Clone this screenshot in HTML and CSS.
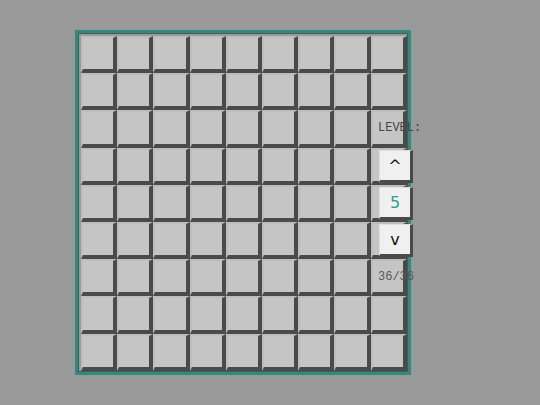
FILE: index.html
```html
<!DOCTYPE html>
<html>
<head>
<meta charset="utf-8">
<link rel="stylesheet" href="styles.css">
</head>
<body>
<div class="stage">
  <div class="board" id="board"></div>
  <div class="panel">
    <div class="label">LEVEL:</div>
    <div class="btn arrow">^</div>
    <div class="btn level">5</div>
    <div class="btn arrow">v</div>
    <div class="count">36/36</div>
  </div>
</div>
<script>
  var b = document.getElementById('board');
  for (var i = 0; i < 81; i++) {
    var c = document.createElement('div');
    c.className = 'cell';
    b.appendChild(c);
  }
</script>
</body>
</html>
```

FILE: styles.css
```css
html, body {
  margin: 0;
  padding: 0;
  background: #999999;
  width: 540px;
  height: 405px;
  overflow: hidden;
}
.stage {
  position: relative;
  padding: 30px 0 0 75px;
}
.board {
  display: grid;
  grid-template-columns: repeat(9, 36.2px);
  grid-template-rows: repeat(9, 37.2px);
  width: max-content;
  padding: 3px 1px 1px 3px;
  border: 3px solid #2f8b7e;
  box-shadow: inset 0 0 0 1px #3f5e59;
  background: #9a9a9a;
}
.cell {
  box-sizing: border-box;
  background: #c5c5c5;
  border-style: solid;
  border-width: 2px 4px 4px 2px;
  border-color: #bdbdbd #4a4a4a #4a4a4a #bdbdbd;
}
.panel {
  position: absolute;
  z-index: 2;
  left: 378px;
  top: 121px;
  width: 60px;
  display: flex;
  flex-direction: column;
  align-items: flex-start;
}
.label, .count {
  font-family: "Liberation Mono", "Courier New", monospace;
  font-size: 12px;
  color: #444444;
  height: 14px;
  line-height: 14px;
  white-space: nowrap;
}
.label {
  margin-bottom: 15px;
}
.count {
  color: #555555;
  margin-top: 9px;
}
.btn {
  box-sizing: border-box;
  width: 34px;
  height: 33px;
  margin-left: 1px;
  margin-bottom: 4px;
  background: #f0f0f0;
  border-style: solid;
  border-width: 1px 3px 3px 1px;
  border-color: #e0e0e0 #4a4a4a #4a4a4a #e0e0e0;
  display: flex;
  align-items: center;
  justify-content: center;
  font-family: "DejaVu Sans", "Liberation Sans", sans-serif;
  color: #111111;
  font-size: 16px;
}
.level {
  color: #2a9d8f;
  font-size: 16px;
}
```
